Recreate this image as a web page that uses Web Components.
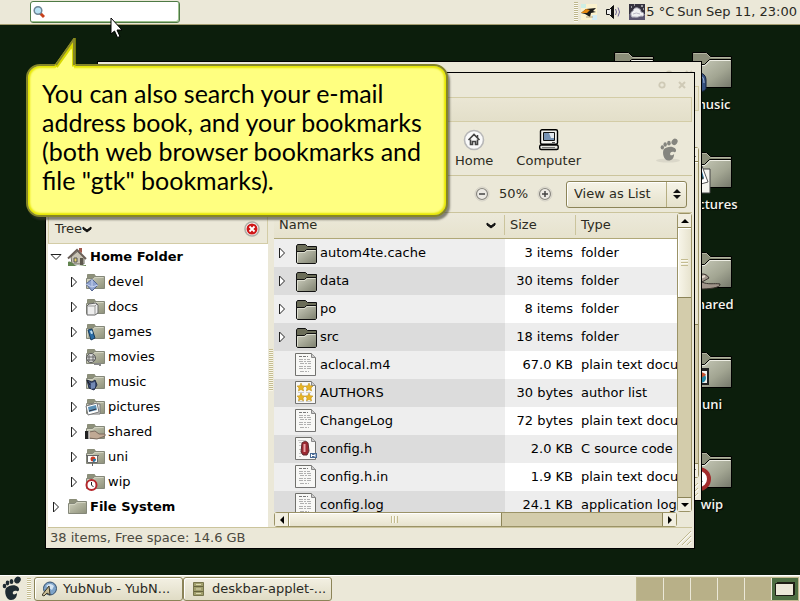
<!DOCTYPE html>
<html lang="en">
<head>
<meta charset="utf-8">
<title>Desktop</title>
<style>
html,body{height:100%;margin:0}
body{font:13px/16px "DejaVu Sans",sans-serif;color:#1c1c14}
</style>
</head>
<body>
<desk-top>
  <desk-panel slot="top">
    <search-box></search-box>
    <system-tray slot="end"></system-tray>
  </desk-panel>

  <desk-icon style="right:135px;top:27px"></desk-icon>
  <desk-icon emblem="note" label="music" style="right:57px;top:27px"></desk-icon>
  <desk-icon emblem="photo" label="pictures" style="right:57px;top:127px"></desk-icon>
  <desk-icon emblem="hand" label="shared" style="right:57px;top:227px"></desk-icon>
  <desk-icon emblem="chart" label="uni" style="right:57px;top:327px"></desk-icon>
  <desk-icon emblem="clock" label="wip" style="right:57px;top:427px"></desk-icon>

  <app-window style="left:97px;right:98px;top:36px;bottom:74px">
    <back-view></back-view>
  </app-window>
  <app-window style="left:45px;right:105px;top:47px;bottom:26px">
    <file-toolbar></file-toolbar>
    <location-bar></location-bar>
    <split-view><side-tree slot="side"></side-tree><file-list></file-list></split-view>
    <status-bar>38 items, Free space: 14.6 GB</status-bar>
  </app-window>

  <help-balloon style="left:26px;top:39px">You can also search your e-mail<br>address book, and your bookmarks<br>(both web browser bookmarks and<br>file "gtk" bookmarks).</help-balloon>
  <mouse-pointer style="left:110px;top:-8px"></mouse-pointer>

  <desk-panel slot="bottom" class="bottom">
    <task-list></task-list>
    <work-pager slot="end"></work-pager>
  </desk-panel>
</desk-top>

<script>
const define = (name, css, html, setup) => {
  const tpl = document.createElement('template');
  tpl.innerHTML = `<style>*{box-sizing:border-box}svg{display:block}button,input,select{font:inherit;color:inherit;margin:0;padding:0;border:0;background:none;outline:0}${css}</style>${html}`;
  customElements.define(name, class extends HTMLElement {
    connectedCallback() {
      if (this.shadowRoot) return;
      this.attachShadow({mode: 'open'}).append(tpl.content.cloneNode(true));
      if (setup) setup(this, this.shadowRoot);
    }
  });
};
const svg = (w, h, body, vb) => `<svg width="${w}" height="${h}" viewBox="${vb || `0 0 ${w} ${h}`}" aria-hidden="true">${body}</svg>`;

/* ---------- drawings ---------- */
const bigFolder = `<defs><linearGradient id="f" x1="0" y1="0" x2="1" y2="1"><stop offset="0" stop-color="#cdcfbe"/><stop offset=".6" stop-color="#a2a592"/><stop offset="1" stop-color="#74776a"/></linearGradient></defs>
<path d="M.5 33V.5h14l4 4h21V33z" fill="#8b8e79" stroke="#000"/><path d="M1.500 1.500h13l4 4h20" fill="none" stroke="#b4b6a2"/>
<path d="M.5 35.500V12.500h12l5-5h22v28z" fill="url(#f)" stroke="#000"/><path d="M1.500 34V13.500h11.500l5-5h20.500" fill="none" stroke="#eeeee4"/>`;
const emblems = {
  note: '<path d="M2 13c0-8 12-8 12 1v9c-4 5-12 2-12-10z" fill="#35517f" stroke="#16233c"/><path d="M5 11c4-3 7 0 7 6" stroke="#9fb4d6" fill="none"/>',
  photo: '<path d="M5 3h13v24H7z" fill="#f4f4ee" stroke="#444"/><path d="M1 0h9l6 16-14 4z" fill="#fff" stroke="#555"/><path d="M3 3l6-1 3 10-8 2z" fill="#2b6f92"/><path d="M4 9l4-2 4 6-8 2z" fill="#344"/>',
  hand: '<path d="M0 13c6-6 14-7 17-1l-7 4c6 3 12 1 18 2 1 4-12 5-20 5H0z" fill="#a0948a" stroke="#39332e"/><path d="M6 13l7-3" stroke="#e6dcd0" stroke-width="2"/>',
  chart: '<path d="M0 3h17M1 4v14h15V4z" fill="#f0f0ee" stroke="#222" stroke-width="2"/><circle cx="9" cy="12" r="5" fill="#2385a2"/><path d="M9 12L4 9a6 6 0 0 1 10 0z" fill="#c65330"/>',
  clock: '<circle cx="7" cy="13" r="10" fill="#fff" stroke="#a22b2b" stroke-width="4"/><path d="M7 7v6l3 3" stroke="#333" stroke-width="2" fill="none"/>'
};
const smallFolder = `<defs><linearGradient id="g" x1="0" y1="0" x2="1" y2="1"><stop offset="0" stop-color="#d0d1bd"/><stop offset="1" stop-color="#8d907a"/></linearGradient></defs>
<path d="M1.500 14V1.500h7l1 2h8V14z" fill="#8e917b" stroke="#8a8d78"/><path d="M.5 15.500V5.500h6l2-2h10v12z" fill="url(#g)" stroke="#85887a"/><path d="M1.500 14.500V6.500h5.500l2-2h8.500" fill="none" stroke="#d2d3c1"/>`;
const mini = {
  devel: '<path d="M0 11l6-5 6 6-6 6z" fill="#8ea2cf" stroke="#54658f"/><path d="M6 6v8l-6-3m6 3l6-2" stroke="#c9d4ee" fill="none"/>',
  docs: '<path d="M3 6l7-1 2 2v8l-3 2H1V8z" fill="#eee" stroke="#666"/><path d="M9 8v8M2 8h7l2-2" stroke="#999" fill="none"/>',
  games: '<path d="M2 7l4-1 3 9-4 2z" fill="#2a6da6" stroke="#173b5d"/><path d="M4 8l2-.5 1 3-2 .5z" fill="#bfe0f5"/>',
  movies: '<circle cx="5" cy="10" r="4.500" fill="#ddd" stroke="#555"/><path d="M3 7v6M7 7v6M1 9h8M1 12h8" stroke="#666"/><path d="M8 16h6v2" fill="none" stroke="#888" stroke-width="2"/>',
  music: '<path d="M1 7l5 2 3-2 2 5-3 5-5-2z" fill="#3c4f78" stroke="#202b47"/><path d="M5 10l4-1v6l-4 1z" fill="#7289b5"/><path d="M1 7l3 5" stroke="#222"/>',
  pictures: '<path d="M3 6h11v10H3z" fill="#eee" stroke="#777"/><path d="M0 8l11-3 2 9-11 3z" fill="#fff" stroke="#777"/><path d="M2 9l8-2 1 5-8 2z" fill="#5b8fb5"/><path d="M3 13l7-2" stroke="#334"/>',
  shared: '<path d="M-1 8h4v8h-4z" fill="#222"/><path d="M3 9l6-1 4 3h6v2l-8 3-8-1z" fill="#c0a994" stroke="#7b6b5e"/><path d="M3 8v8" stroke="#fff"/>',
  uni: '<path d="M1.500 7.500h10v7h-10z" fill="#fff" stroke="#666"/><path d="M0 7.500h13M6.500 15v3" stroke="#666"/><circle cx="7" cy="11" r="2.500" fill="#c33b25"/><path d="M7 11h3a3 3 0 0 1-3 3z" fill="#2679a8"/>',
  wip: '<circle cx="5.500" cy="12" r="5" fill="#fff" stroke="#b5262b" stroke-width="2"/><path d="M5.500 9v3l2 2" stroke="#222" fill="none"/>'
};
const house = '<path d="M3 9l7-6 6 6v7H4z" fill="#c9c3b5" stroke="#6d6b60"/><path d="M0 10.500L9 2l9 9" fill="none" stroke="#6a5f58" stroke-width="2"/><path d="M11 0h3v5l-3-2z" fill="#a05a4d"/><path d="M6 10h3v4H6z" fill="#e9d46b" stroke="#555"/><path d="M12 10h3v7h-3z" fill="#5d584e"/><path d="M0 14c4-2 5 4 10 4l8-1v1H0z" fill="#62844f"/>';
const listFolder = `<defs><linearGradient id="l" x1="0" y1="0" x2="1" y2="1"><stop offset="0" stop-color="#cfd0c0"/><stop offset="1" stop-color="#7c7f6d"/></linearGradient></defs>
<path d="M1.500 18V5l1-1.500h8l2 2h9V18z" fill="#6b6d58" stroke="#111"/><path d="M1.500 21.500v-11h8l2-2h10v13l-1 1h-18z" fill="url(#l)" stroke="#111"/><path d="M2.500 21v-9.500h7.500l2-2h8.500" fill="none" stroke="#dcddcf"/>`;
const sheet = '<path d="M.5.5h16l4 4v18H.5z" fill="#f8f8f6" stroke="#70706c"/><path d="M16.500.5v4h4" fill="#ccc" stroke="#888"/><path d="M1 22.500h19" stroke="#777"/>';
const fileIcons = {
  folder: listFolder,
  text: sheet + '<path d="M4 3.500h9" stroke="#777" stroke-dasharray="3 1"/><path d="M4 6.500h11M4 8.500h12M5 10.500h11M4 13.500h12M4 15.500h12M5 18.500h9" stroke="#b0b0b0" stroke-dasharray="4 1 2 1"/>',
  stars: sheet + ['6,6', '14,6', '6,16', '14,16'].map(p => `<path transform="translate(${p})" d="M0-4l1.200 2.700 2.800.3-2 2 .6 3L0 2.500-2.600 4l.6-3-2-2 2.800-.3z" fill="#e8b423" stroke="#b88a14" stroke-width=".5"/>`).join('') + '<path d="M3 11.500h6M11 11.500h5M3 20.500h6M11 20.500h5" stroke="#ccc"/>',
  csrc: sheet + '<path d="M3 3.500h8M4 5.500h5M4 8.500h3M4 12.500h3M4 16.500h3M4 19.500h2" stroke="#c6c6c6"/><path d="M7 6c2-2 5-2 6 0l1 8-2 4H8l-2-3z" fill="#9c2730" stroke="#5b2a2e"/><path d="M9.500 7v8" stroke="#e8a3a6" stroke-width="2"/><path d="M15 16h7v5h-7z" fill="#4a6b94"/><path d="M16.500 17v3M20 17v3M16.500 18.500H20" stroke="#fff"/>'
};
const foot = c => `<g fill="${c}"><path d="M4 12c3-3 9-4 12-1 2 2 1 5-1 4-3-1-5 1-4 3 1 1 3 0 4-1 0 4-2 7-6 7-5 0-7-8-5-12z"/><ellipse cx="2.500" cy="10" rx="1.800" ry="2.200"/><ellipse cx="5.500" cy="7" rx="1.800" ry="2.400"/><ellipse cx="9.500" cy="5.500" rx="1.900" ry="2.600"/><ellipse cx="15.500" cy="4" rx="3" ry="3.600" transform="rotate(35 15.500 4)"/></g>`;
const closedArrow = svg(8, 12, '<path d="M1.500 1v10l5-5z" fill="#fff" stroke="#222"/>');
const openArrow = svg(12, 8, '<path d="M1 1.500h10l-5 5z" fill="#fff" stroke="#222"/>');
const chevron = svg(10, 8, '<path d="M1 2l4 3 4-3v2L5 7 1 4z" fill="#111" stroke="#111"/>');

/* ---------- desktop shell ---------- */
define('desk-top', `
  :host{display:grid;grid-template-rows:25px minmax(0,1fr) 26px;height:100%;background:#0c1e0c}
  main{position:relative;min-height:0}
`, '<slot name="top"></slot><main><slot></slot></main><slot name="bottom"></slot>');

define('desk-panel', `
  :host{display:flex;justify-content:space-between;align-items:center;background:#ebe8d8;border-bottom:1px solid #a49d70;color:#2a291f}
  :host(.bottom){border-bottom:0;border-top:1px solid #fff}
`, '<slot></slot><slot name="end"></slot>');

define('search-box', `
  :host{display:block;padding-left:30px}
  label{display:flex;align-items:center;gap:2px;width:150px;height:22px;padding-left:2px;background:#fff;border:1px solid #4e7a45;border-radius:3px;box-shadow:inset -1px -1px #9dc08d}
  input{flex:1;min-width:0;height:18px}
`, `<label>${svg(12, 14, '<path d="M7 8l4 4" stroke="#c8401c" stroke-width="3"/><circle cx="5" cy="5.500" r="3.800" fill="#b8e2f4" stroke="#6e8596" stroke-width="1.500"/>')}<input type="text" aria-label="Search"></label>`);

define('system-tray', `
  :host{display:flex;align-items:center;padding-right:3px}
  .grip{width:4px;height:20px;margin-right:3px;background:repeating-linear-gradient(#bdb68c 0 1px,#fbfaf2 1px 2px)}
  .gap{width:7px}
  time{padding-left:3px}
`, `<span class="grip"></span>
${svg(16, 16, '<path d="M0 0h16v16H0z" fill="#fbf2cf"/><path d="M0 0h5v4H0z" fill="#cdeee5"/><path d="M11 11h5v5h-5z" fill="#d3ecf6"/><path d="M0 9l5-4 10-1-3 3 3 1-5 1-1 4-5-3z" fill="#1d1b18"/><path d="M0 9l5-4 4 1-3 3z" fill="#e78a12"/><path d="M5 13h7" stroke="#b7a27a"/>')}
<span class="gap"></span>
${svg(18, 16, '<path d="M2.500 5.500h3l4-4v13l-4-4h-3z" fill="#eee" stroke="#111"/><path d="M8 3v10" stroke="#111" stroke-width="2"/><path d="M11.500 5q2 3 0 6M14 3.500q3 4.500 0 9" fill="none" stroke="#6f6494"/>')}
<span class="gap"></span>
${svg(16, 16, '<path d="M0 0h16v16H0z" fill="#35323f"/><path d="M0 10h16v6H0z" fill="#5b5670"/><path d="M2 3h1M12 2h2M5 1h1M14 5h1" stroke="#fff"/><path d="M2 11q-1-3 2-4 1-4 5-3 3 1 3 4 3 0 3 3-1 2-3 1-4 2-7 1-3 1-3-2z" fill="#f0f0f2" stroke="#a5a3b2"/><path d="M4 10q3-2 7 0" stroke="#bbb9c6" fill="none"/>')}
<span style="padding-left:1px">5 °C</span><time>Sun Sep 11, 23:00</time>`);

define('desk-icon', `
  :host{position:absolute;display:flex;flex-direction:column;align-items:center;gap:7px;width:62px;color:#f4f4ee;font:600 13px/18px "Open Sans","Noto Sans",sans-serif;text-shadow:1px 1px 1px #000}
  .pic{position:relative}.em{position:absolute;left:0;bottom:-6px}
`, '<div class="pic"></div><span></span>', (el, root) => {
  const label = el.getAttribute('label'), e = el.getAttribute('emblem');
  root.querySelector('.pic').innerHTML = svg(40, 36, bigFolder) + (e ? `<div class="em">${svg(30, 28, emblems[e])}</div>` : '');
  if (label) root.querySelector('span').textContent = label;
});

/* ---------- windows ---------- */
define('app-window', `
  :host{position:absolute;display:flex;flex-direction:column;padding:0 2px;background:#ebe8d8;border:1px solid #000;overflow:hidden}
  header{display:flex;justify-content:flex-end;align-items:center;gap:12px;height:24px;padding-right:5px}
  nav{height:25px;flex:none;border:1px solid #d3cca6;background:linear-gradient(#eae6d4,#e3dfc9)}
`, `<header><button aria-label="Maximize">${svg(8, 8, '<circle cx="4" cy="4" r="2.700" fill="none" stroke="#cfcab6" stroke-width="1.800"/>')}</button>
<button aria-label="Close">${svg(9, 8, '<path d="M1 1l6 6M7 1L1 7" stroke="#cfcab6" stroke-width="2"/>')}</button></header><nav></nav><slot></slot>`);

define('scroll-bar', `
  :host{display:flex;flex-direction:column;width:15px;background:#d3ccab;border:1px solid #9b9367;border-radius:3px}
  :host([horizontal]){flex-direction:row;width:auto;height:15px}
  button{flex:none;display:grid;place-items:center;width:13px;height:14px;background:#f1eee0;border-bottom:1px solid #8c8458}
  button:last-child{border-bottom:0;border-top:1px solid #8c8458}
  :host([horizontal]) button{width:14px;height:13px;border:0;border-right:1px solid #8c8458}
  :host([horizontal]) button:last-child{border-right:0;border-left:1px solid #8c8458}
  .track{flex:1;display:flex;flex-direction:inherit;min-width:0;min-height:0}
  .thumb{flex:0 0 var(--thumb,30%);display:grid;place-items:center;background:linear-gradient(90deg,#f8f6ea,#e7e3ce);border-bottom:1px solid #8c8458;box-shadow:inset 1px 1px #fff}
  :host([horizontal]) .thumb{background:linear-gradient(#f8f6ea,#e7e3ce);border:0;border-right:1px solid #8c8458}
  .grip{width:7px;height:7px;background:repeating-linear-gradient(#c4bc90 0 1px,#faf9f0 1px 2px,transparent 2px 3px)}
  :host([horizontal]) .grip{background:repeating-linear-gradient(90deg,#c4bc90 0 1px,#faf9f0 1px 2px,transparent 2px 3px)}
`, '<button aria-label="Back"></button><div class="track"><div class="thumb"><span class="grip"></span></div></div><button aria-label="Forward"></button>', (el, root) => {
  const h = el.hasAttribute('horizontal');
  const [a, b] = root.querySelectorAll('button');
  a.innerHTML = svg(8, 8, h ? '<path d="M6 0v8L2 4z"/>' : '<path d="M0 6h8L4 2z"/>');
  b.innerHTML = svg(8, 8, h ? '<path d="M2 0v8l4-4z"/>' : '<path d="M0 2h8L4 6z"/>');
});

const resizeGrip = svg(16, 16, '<path d="M1 15L15 1M6 15l9-9M11 15l4-4" stroke="#c0b98f"/><path d="M2 15.500L15.500 2M7 15.500l8.500-8.500M12 15.500l3.500-3.500" stroke="#fff"/>');

define('back-view', `
  :host{flex:1;display:flex;flex-direction:column;align-items:flex-end;min-height:0;padding-top:36px}
  scroll-bar{flex:1;--thumb:54%}
  .end{height:22px;padding-top:4px}
`, `<scroll-bar></scroll-bar><div class="end">${resizeGrip}</div>`);

define('tool-button', `
  :host{display:block}
  button{display:flex;flex-direction:column;align-items:center;gap:2px;color:#2c2b22}
`, '<button><slot name="icon"></slot><span><slot></slot></span></button>');

define('file-toolbar', `
  :host{flex:none;display:flex;justify-content:flex-end;align-items:center;height:53px;border-bottom:1px solid #cbc49c;padding-right:8px}
  .home{margin-right:23px}.comp{margin-right:73px}
`, `<tool-button class="home"><span slot="icon">${svg(22, 22, '<circle cx="11" cy="11" r="9.500" fill="#fafafa" stroke="#b8b8b8" stroke-width="1.600"/><path d="M5.500 11L11 5.500l5.500 5.500M7.500 10.500v5h2v-3h3v3h2v-5" fill="none" stroke="#444" stroke-width="1.600"/><path d="M14.500 6v3" stroke="#444" stroke-width="1.500"/>')}</span>Home</tool-button>
<tool-button class="comp"><span slot="icon">${svg(22, 22, '<rect x="2.500" y=".7" width="17" height="14.500" rx="1.500" fill="#f3f3ef" stroke="#000" stroke-width="1.400"/><path d="M5.500 3.500h11v8h-11z" fill="#7692b4" stroke="#111"/><path d="M11 4h5v5h-3z" fill="#e4e9ee"/><path d="M14 13.500h3" stroke="#555"/><rect x="1.700" y="16" width="18.500" height="4.500" rx="1.500" fill="#e8e8e2" stroke="#000" stroke-width="1.400"/><path d="M4 18.500h13" stroke="#777"/>')}</span>Computer</tool-button>
${svg(30, 28, `<ellipse cx="14" cy="25.500" rx="12" ry="2" fill="#dad7c9"/><g transform="translate(6,3) scale(.94)">${foot('#85857f')}</g>`)}`);

define('location-bar', `
  :host{flex:none;display:flex;justify-content:flex-end;align-items:center;gap:9px;height:36px;border-bottom:1px solid #cbc49c;padding-right:5px;color:#2c2b22}
  .pick{display:grid;grid-template-columns:1fr 20px;width:121px;height:27px;margin-left:4px;border:1px solid #8c8458;border-radius:3px;background:linear-gradient(#f6f4e8,#e5e1cb);box-shadow:inset 1px 1px #fff}
  select{grid-area:1/1/2/3;appearance:none;padding-left:7px}
  .arrows{grid-area:1/2;display:grid;place-items:center;border-left:1px solid #b5ad81;pointer-events:none}
`, `<button aria-label="Zoom out">${svg(16, 16, '<circle cx="8" cy="8" r="5.500" fill="#eceae4" stroke="#8a8882" stroke-width="1.200"/><circle cx="8" cy="8" r="7" fill="none" stroke="#d3d0c6"/><path d="M5 8h6" stroke="#444" stroke-width="1.500"/>')}</button>
<span>50%</span>
<button aria-label="Zoom in">${svg(16, 16, '<circle cx="8" cy="8" r="5.500" fill="#eceae4" stroke="#8a8882" stroke-width="1.200"/><circle cx="8" cy="8" r="7" fill="none" stroke="#d3d0c6"/><path d="M5 8h6M8 5v6" stroke="#444" stroke-width="1.500"/>')}</button>
<div class="pick"><select aria-label="View"><option>View as List</option></select><span class="arrows">${svg(8, 12, '<path d="M0 5h8L4 1zM0 7h8l-4 4z" fill="#111"/>')}</span></div>`);

define('split-view', `
  :host{flex:1;min-height:0;display:grid;grid-template-columns:220px 6px minmax(0,1fr);grid-template-rows:minmax(0,1fr)}
  .grip{align-self:center;justify-self:center;width:4px;height:42px;background:repeating-linear-gradient(#c4bc90 0 1px,#f8f6ea 1px 2px)}
`, '<slot name="side"></slot><span class="grip"></span><slot></slot>');

define('side-tree', `
  :host{display:flex;flex-direction:column;min-height:0;background:#fff;color:#000}
  header{flex:none;display:flex;justify-content:space-between;align-items:flex-end;height:31px;padding:0 7px 6px 6px;background:#ebe8d8;border:1px solid #d3cca6;border-top:0;color:#2c2b22}
  .head{display:flex;align-items:center;gap:0}
  ul{list-style:none;margin:0;padding:0}
  li{display:flex;align-items:center;gap:4px;height:25px}
  li.sub{padding-left:18px}
  li.top{font-weight:bold}
  li button{flex:none;display:grid;place-items:center;width:16px;height:16px}
  li svg{overflow:visible}
  .i{flex:none;width:18px}
`, `<header><button class="head">Tree${chevron}</button><button aria-label="Close side pane">${svg(16, 16, '<circle cx="8" cy="8" r="7" fill="#fff" stroke="#b0aea6" stroke-width="1.600"/><circle cx="8" cy="8" r="5.500" fill="#cf1717"/><path d="M5.500 5.500l5 5M10.500 5.500l-5 5" stroke="#fff" stroke-width="1.800"/>')}</button></header><ul></ul>`, (el, root) => {
  const row = (cls, arrow, icon, name) => `<li class="${cls}"><button aria-label="Expand ${name}">${arrow}</button><span class="i">${svg(19, 18, icon)}</span><span>${name}</span></li>`;
  root.querySelector('ul').innerHTML = row('top', openArrow, house, 'Home Folder')
    + Object.keys(mini).map(n => row('sub', closedArrow, smallFolder + mini[n], n)).join('')
    + row('top', closedArrow, smallFolder, 'File System');
});

define('file-list', `
  :host{display:grid;grid-template-columns:minmax(0,1fr) 15px;grid-template-rows:minmax(0,1fr) 15px;min-height:0;color:#000}
  .view{overflow:hidden;background:#fff}
  table{border-collapse:collapse;table-layout:fixed;width:100%}
  th,td{padding:0;font-weight:normal;text-align:left;white-space:nowrap}
  th{height:25px;background:linear-gradient(#ece9da,#e6e2cd);border-bottom:1px solid #b0a878;color:#2c2b22}
  th div{display:flex;justify-content:space-between;align-items:center;height:20px;padding:0 8px 0 5px;border-right:1px solid #cbc49c}
  th:last-child div{border-right:0}
  td{height:28px}
  .name{width:231px}.size{width:71px}
  td.size{text-align:right;padding-right:3px}
  td.type{padding-left:5px}
  tbody tr:nth-child(even){background:#ededed}
  td.name{background:#eee}
  tr:nth-child(even) td.name{background:#dcdcdc}
  td.name div{display:flex;align-items:center;height:28px;padding-left:4px}
  .x{width:8px;margin-right:9px}
  .i{width:22px;margin-right:3px}
  .i svg{overflow:visible}
  .v{--thumb:26%}.h{--thumb:57%}
`, `<div class="view"><table><thead><tr><th class="name"><div>Name${chevron}</div></th><th class="size"><div>Size</div></th><th class="type"><div>Type</div></th></tr></thead><tbody></tbody></table></div>
<scroll-bar class="v"></scroll-bar><scroll-bar class="h" horizontal></scroll-bar>`, (el, root) => {
  root.querySelector('tbody').innerHTML = [
    ['folder', 'autom4te.cache', '3 items', 'folder'],
    ['folder', 'data', '30 items', 'folder'],
    ['folder', 'po', '8 items', 'folder'],
    ['folder', 'src', '18 items', 'folder'],
    ['text', 'aclocal.m4', '67.0 KB', 'plain text docu'],
    ['stars', 'AUTHORS', '30 bytes', 'author list'],
    ['text', 'ChangeLog', '72 bytes', 'plain text docu'],
    ['csrc', 'config.h', '2.0 KB', 'C source code'],
    ['text', 'config.h.in', '1.9 KB', 'plain text docu'],
    ['text', 'config.log', '24.1 KB', 'application log']
  ].map(([k, n, s, t]) => `<tr><td class="name"><div>${k === 'folder' ? `<button class="x" aria-label="Expand ${n}">${closedArrow}</button>` : '<span class="x"></span>'}<span class="i">${svg(22, 24, fileIcons[k])}</span>${n}</div></td><td class="size">${s}</td><td class="type">${t}</td></tr>`).join('');
});

define('status-bar', `
  :host{flex:none;display:flex;justify-content:space-between;align-items:center;height:20px;padding-left:2px;border-top:1px solid #cbc49c;color:#4a4940}
`, `<span><slot></slot></span>${resizeGrip}`);

/* ---------- overlays ---------- */
define('help-balloon', `
  :host{position:absolute;padding:13px 24px 20px 14px;color:#000;font:25px/29px Lato,"Noto Sans",sans-serif;white-space:nowrap;background:#ffff80;border:2px solid #85852a;border-radius:14px;box-shadow:inset 0 0 2px 2px #e6e600,2px 3px 2px rgba(60,60,50,.6)}
  svg{position:absolute;left:26px;top:-28px}
`, `${svg(24, 32, '<path d="M1 31L20 3v28z" fill="#ffff80"/><path d="M2 28.500L19.500 4v24.500" fill="none" stroke="#d8d800" stroke-width="4"/><path d="M5 30L18 11v21H5z" fill="#ffff80"/><path d="M2 27L20 1v26" fill="none" stroke="#85852a" stroke-width="2"/>')}<slot></slot>`);

define('mouse-pointer', ':host{position:absolute}', svg(13, 22, '<path d="M1 1v16l3.500-3 3 6.500 2.500-1-3-6.500h5z" fill="#fff" stroke="#000"/>'));

/* ---------- bottom panel ---------- */
define('task-list', `
  :host{display:flex;align-items:center;padding-left:2px}
  .grip{width:4px;height:21px;margin:0 3px 0 2px;background:repeating-linear-gradient(#c4bc90 0 1px,#fbfaf2 1px 2px)}
  .task{display:flex;align-items:center;gap:6px;width:149px;height:24px;padding-left:7px;border:1px solid #8c8458;border-radius:3px;background:linear-gradient(#f3f0e3,#e0dcc5);box-shadow:inset 1px 1px #fff;white-space:nowrap}
`, `<button aria-label="Main menu">${svg(23, 25, foot('#1e2b33'))}</button><span class="grip"></span>
<button class="task">${svg(15, 16, '<circle cx="8" cy="7.500" r="6.500" fill="#7ea3c8" stroke="#34506f"/><path d="M4 5q4-4 8 0l-2 4z" fill="#d4e4f2"/><path d="M0 14L7 5l1 9-3-2-3 3z" fill="#c9bd96" stroke="#3b3628"/>')}<span>YubNub - YubN...</span></button>
<button class="task">${svg(15, 16, '<path d="M2.500 1.500h10v13h-10z" fill="#a19f6c" stroke="#77754b"/><path d="M3 5.500h9M3 10.500h9" stroke="#66643e"/><path d="M5 3.500h5M5 8h5M5 12.500h5" stroke="#dcdab2"/>')}<span>deskbar-applet-...</span></button>`);

define('work-pager', `
  :host{display:flex;gap:1px;height:22px;margin-right:1px;border:1px solid #c0b98f;background:#ebe8d8}
  button{display:grid;place-items:center;width:26px;background:#b8b088}
  button:last-child{background:#4d6e42}
`, '<button aria-label="Workspace 1"></button><button aria-label="Workspace 2"></button><button aria-label="Workspace 3"></button><button aria-label="Workspace 4"></button><button aria-label="Workspace 5"></button>'
 + `<button aria-label="Workspace 6">${svg(22, 16, '<path d="M3 1h18v13H3z" fill="#1d1d14"/><path d="M1.500 2.500h18v12h-18z" fill="#ebe8d8" stroke="#1d1d14"/>')}</button>`);
</script>
</body>
</html>
